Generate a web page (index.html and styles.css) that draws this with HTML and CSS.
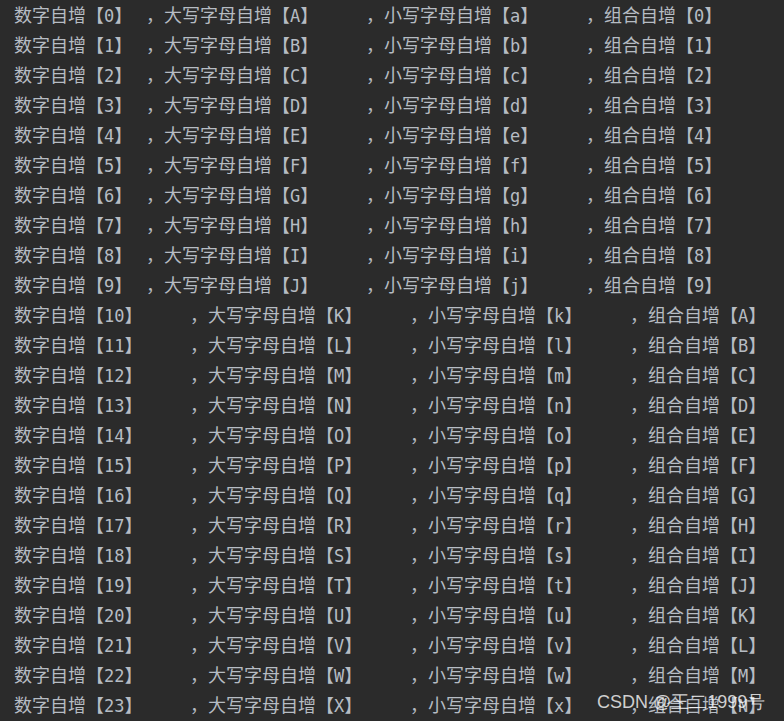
FILE: index.html
```html
<!DOCTYPE html>
<html>
<head>
  <meta charset="UTF-8">
  <link rel="stylesheet" href="styles.css">
</head>
<body>
  <!-- 控制台输出 -->
  <div class="console">
    <div class="line"><span>数字自增【<i>0</i>】</span><span>，大写字母自增【<i>A</i>】</span><span>，小写字母自增【<i>a</i>】</span><span>，组合自增【<i>0</i>】</span></div>
    <div class="line"><span>数字自增【<i>1</i>】</span><span>，大写字母自增【<i>B</i>】</span><span>，小写字母自增【<i>b</i>】</span><span>，组合自增【<i>1</i>】</span></div>
    <div class="line"><span>数字自增【<i>2</i>】</span><span>，大写字母自增【<i>C</i>】</span><span>，小写字母自增【<i>c</i>】</span><span>，组合自增【<i>2</i>】</span></div>
    <div class="line"><span>数字自增【<i>3</i>】</span><span>，大写字母自增【<i>D</i>】</span><span>，小写字母自增【<i>d</i>】</span><span>，组合自增【<i>3</i>】</span></div>
    <div class="line"><span>数字自增【<i>4</i>】</span><span>，大写字母自增【<i>E</i>】</span><span>，小写字母自增【<i>e</i>】</span><span>，组合自增【<i>4</i>】</span></div>
    <div class="line"><span>数字自增【<i>5</i>】</span><span>，大写字母自增【<i>F</i>】</span><span>，小写字母自增【<i>f</i>】</span><span>，组合自增【<i>5</i>】</span></div>
    <div class="line"><span>数字自增【<i>6</i>】</span><span>，大写字母自增【<i>G</i>】</span><span>，小写字母自增【<i>g</i>】</span><span>，组合自增【<i>6</i>】</span></div>
    <div class="line"><span>数字自增【<i>7</i>】</span><span>，大写字母自增【<i>H</i>】</span><span>，小写字母自增【<i>h</i>】</span><span>，组合自增【<i>7</i>】</span></div>
    <div class="line"><span>数字自增【<i>8</i>】</span><span>，大写字母自增【<i>I</i>】</span><span>，小写字母自增【<i>i</i>】</span><span>，组合自增【<i>8</i>】</span></div>
    <div class="line"><span>数字自增【<i>9</i>】</span><span>，大写字母自增【<i>J</i>】</span><span>，小写字母自增【<i>j</i>】</span><span>，组合自增【<i>9</i>】</span></div>
    <div class="line wide"><span>数字自增【<i>10</i>】</span><span>，大写字母自增【<i>K</i>】</span><span>，小写字母自增【<i>k</i>】</span><span>，组合自增【<i>A</i>】</span></div>
    <div class="line wide"><span>数字自增【<i>11</i>】</span><span>，大写字母自增【<i>L</i>】</span><span>，小写字母自增【<i>l</i>】</span><span>，组合自增【<i>B</i>】</span></div>
    <div class="line wide"><span>数字自增【<i>12</i>】</span><span>，大写字母自增【<i>M</i>】</span><span>，小写字母自增【<i>m</i>】</span><span>，组合自增【<i>C</i>】</span></div>
    <div class="line wide"><span>数字自增【<i>13</i>】</span><span>，大写字母自增【<i>N</i>】</span><span>，小写字母自增【<i>n</i>】</span><span>，组合自增【<i>D</i>】</span></div>
    <div class="line wide"><span>数字自增【<i>14</i>】</span><span>，大写字母自增【<i>O</i>】</span><span>，小写字母自增【<i>o</i>】</span><span>，组合自增【<i>E</i>】</span></div>
    <div class="line wide"><span>数字自增【<i>15</i>】</span><span>，大写字母自增【<i>P</i>】</span><span>，小写字母自增【<i>p</i>】</span><span>，组合自增【<i>F</i>】</span></div>
    <div class="line wide"><span>数字自增【<i>16</i>】</span><span>，大写字母自增【<i>Q</i>】</span><span>，小写字母自增【<i>q</i>】</span><span>，组合自增【<i>G</i>】</span></div>
    <div class="line wide"><span>数字自增【<i>17</i>】</span><span>，大写字母自增【<i>R</i>】</span><span>，小写字母自增【<i>r</i>】</span><span>，组合自增【<i>H</i>】</span></div>
    <div class="line wide"><span>数字自增【<i>18</i>】</span><span>，大写字母自增【<i>S</i>】</span><span>，小写字母自增【<i>s</i>】</span><span>，组合自增【<i>I</i>】</span></div>
    <div class="line wide"><span>数字自增【<i>19</i>】</span><span>，大写字母自增【<i>T</i>】</span><span>，小写字母自增【<i>t</i>】</span><span>，组合自增【<i>J</i>】</span></div>
    <div class="line wide"><span>数字自增【<i>20</i>】</span><span>，大写字母自增【<i>U</i>】</span><span>，小写字母自增【<i>u</i>】</span><span>，组合自增【<i>K</i>】</span></div>
    <div class="line wide"><span>数字自增【<i>21</i>】</span><span>，大写字母自增【<i>V</i>】</span><span>，小写字母自增【<i>v</i>】</span><span>，组合自增【<i>L</i>】</span></div>
    <div class="line wide"><span>数字自增【<i>22</i>】</span><span>，大写字母自增【<i>W</i>】</span><span>，小写字母自增【<i>w</i>】</span><span>，组合自增【<i>M</i>】</span></div>
    <div class="line wide"><span>数字自增【<i>23</i>】</span><span>，大写字母自增【<i>X</i>】</span><span>，小写字母自增【<i>x</i>】</span><span>，组合自增【<i>N</i>】</span></div>
  </div>

  <!-- 水印 -->
  <div class="watermark">CSDN @王二1999号</div>
</body>
</html>
```
FILE: styles.css
```css
/* 基础样式 */
body {
  margin: 0;
  background: #2b2b2b;
  height: 721px;
  overflow: hidden;
  position: relative;
}

.console {
  padding-left: 14px;
  color: #b6bcc3;
  font-family: "Noto Sans CJK SC", sans-serif;
  font-size: 18px;
}

/* 每一行，按制表位分列 */
.line {
  display: grid;
  grid-template-columns: 132px 220px 220px auto;
  height: 30px;
  line-height: 29px;
  white-space: nowrap;
}

.line.wide {
  grid-template-columns: 176px 220px 220px auto;
}

/* 括号里的字母和数字 */
.line i {
  font-style: normal;
  font-family: "DejaVu Sans Mono", monospace;
  font-size: 17px;
}

/* 水印 */
.watermark {
  position: absolute;
  left: 597px;
  top: 690px;
  font-family: "Liberation Sans", Arial, sans-serif;
  font-size: 18px;
  line-height: 24px;
  color: rgba(255, 255, 255, 0.78);
}
```
